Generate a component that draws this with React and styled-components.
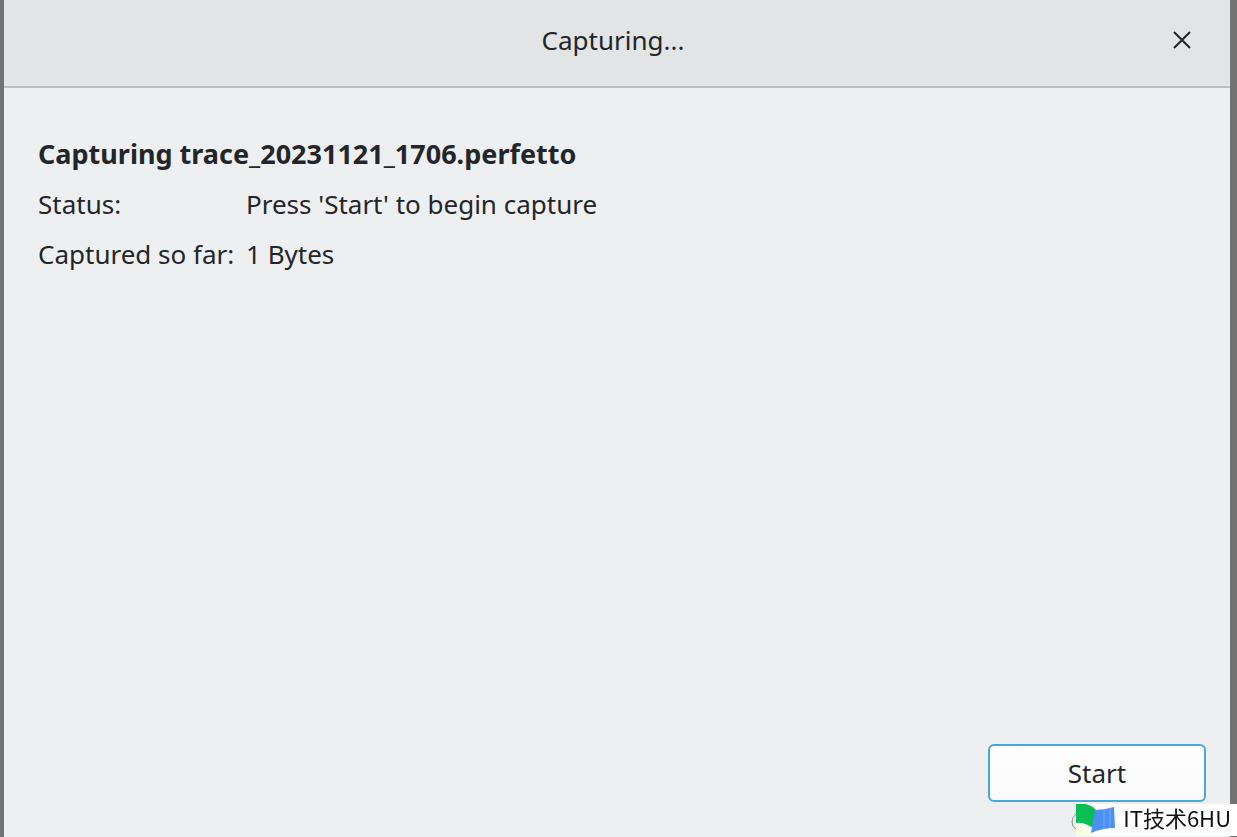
import React, { useState } from "react";
import styled, { createGlobalStyle } from "styled-components";

const GlobalStyle = createGlobalStyle`
  * {
    box-sizing: border-box;
  }
  body {
    margin: 0;
    background: #727372;
    color: #232629;
    font-family: "Noto Sans", "Noto Sans CJK SC", sans-serif;
    font-size: 26px;
    line-height: 38px;
  }
`;

const Dialog = styled.div`
  display: flex;
  flex-direction: column;
  min-height: 100vh;
  margin: 0 7px 0 4px;
  background: #eeeff1;
`;

const TitleBar = styled.header`
  display: flex;
  align-items: center;
  height: 88px;
  padding: 0 20px 6px 68px;
  background: #e2e4e6;
  border-bottom: 2px solid #bcbec0;
`;

const Title = styled.h1`
  flex: 1;
  margin: 0;
  font-size: 26px;
  font-weight: 400;
  text-align: center;
`;

const CloseButton = styled.button`
  display: flex;
  align-items: center;
  justify-content: center;
  width: 56px;
  height: 56px;
  padding: 0;
  border: 0;
  background: none;
  color: inherit;
`;

const Content = styled.main`
  flex: 1;
  padding: 47px 34px;
`;

const Heading = styled.h2`
  margin: 0 0 12px;
  font-size: 27px;
  font-weight: 700;
`;

const Details = styled.dl`
  display: grid;
  grid-template-columns: 200px 1fr;
  gap: 12px 8px;
  margin: 0;
  white-space: nowrap;

  dd {
    margin: 0;
  }
`;

const Actions = styled.footer`
  display: flex;
  justify-content: flex-end;
  padding: 0 24px 35px;
`;

const StartButton = styled.button`
  width: 218px;
  height: 58px;
  padding: 0;
  border: 2px solid #48a8d8;
  border-radius: 6px;
  background: linear-gradient(#fefefe, #fafafa);
  color: inherit;
  font: inherit;
`;

// Sits over the bottom right corner of the dialog
const Watermark = styled.div`
  position: fixed;
  right: 0;
  bottom: 1px;
  display: flex;
  gap: 7px;
  height: 32px;
  padding-right: 6px;
  background: #fff;
  color: #111;
  font-family: "Noto Sans CJK SC", sans-serif;
  font-size: 22px;
  font-weight: 400;
  line-height: 27px;
  white-space: nowrap;
`;

const Logo = styled.svg`
  flex: none;
  margin-left: -5px;
`;

const App = () => {
  const [started, setStarted] = useState(false);

  return (
    <>
      <GlobalStyle />
      <Dialog role="dialog" aria-labelledby="title">
        <TitleBar>
          <Title id="title">Capturing...</Title>
          <CloseButton aria-label="Close">
            <svg width="20" height="20" viewBox="0 0 20 20">
              <path
                d="M2 2L18 18M18 2L2 18"
                stroke="currentColor"
                strokeWidth="2"
                fill="none"
              />
            </svg>
          </CloseButton>
        </TitleBar>
        <Content>
          <Heading>Capturing trace_20231121_1706.perfetto</Heading>
          <Details>
            <dt>Status:</dt>
            <dd>{started ? "Capturing" : "Press 'Start' to begin capture"}</dd>
            <dt>Captured so far:</dt>
            <dd>1 Bytes</dd>
          </Details>
        </Content>
        <Actions>
          <StartButton onClick={() => setStarted(!started)}>
            {started ? "Stop" : "Start"}
          </StartButton>
        </Actions>
      </Dialog>
      <Watermark>
        <Logo width="45" height="32" viewBox="0 0 45 32">
          <path d="M0 0H5V32H0Z" fill="#eeeff1" />
          <path d="M5 10Q1 13 1 18Q1 23 5 25" stroke="#8c8e90" fill="none" />
          <path d="M5 20Q13 22 21 28L19 32H5Z" fill="#fdffe2" />
          <path d="M5 0H14Q21 1 25 6L22 24Q13 18 5 19Z" fill="#0bbd55" />
          <path d="M24 6Q33 6 43 3L44 24Q31 24 20 29Z" fill="#4b90f2" />
          <path d="M33 5V25M39 4V24" stroke="#76acf5" />
        </Logo>
        <span>IT技术6HU</span>
      </Watermark>
    </>
  );
};

export default App;
